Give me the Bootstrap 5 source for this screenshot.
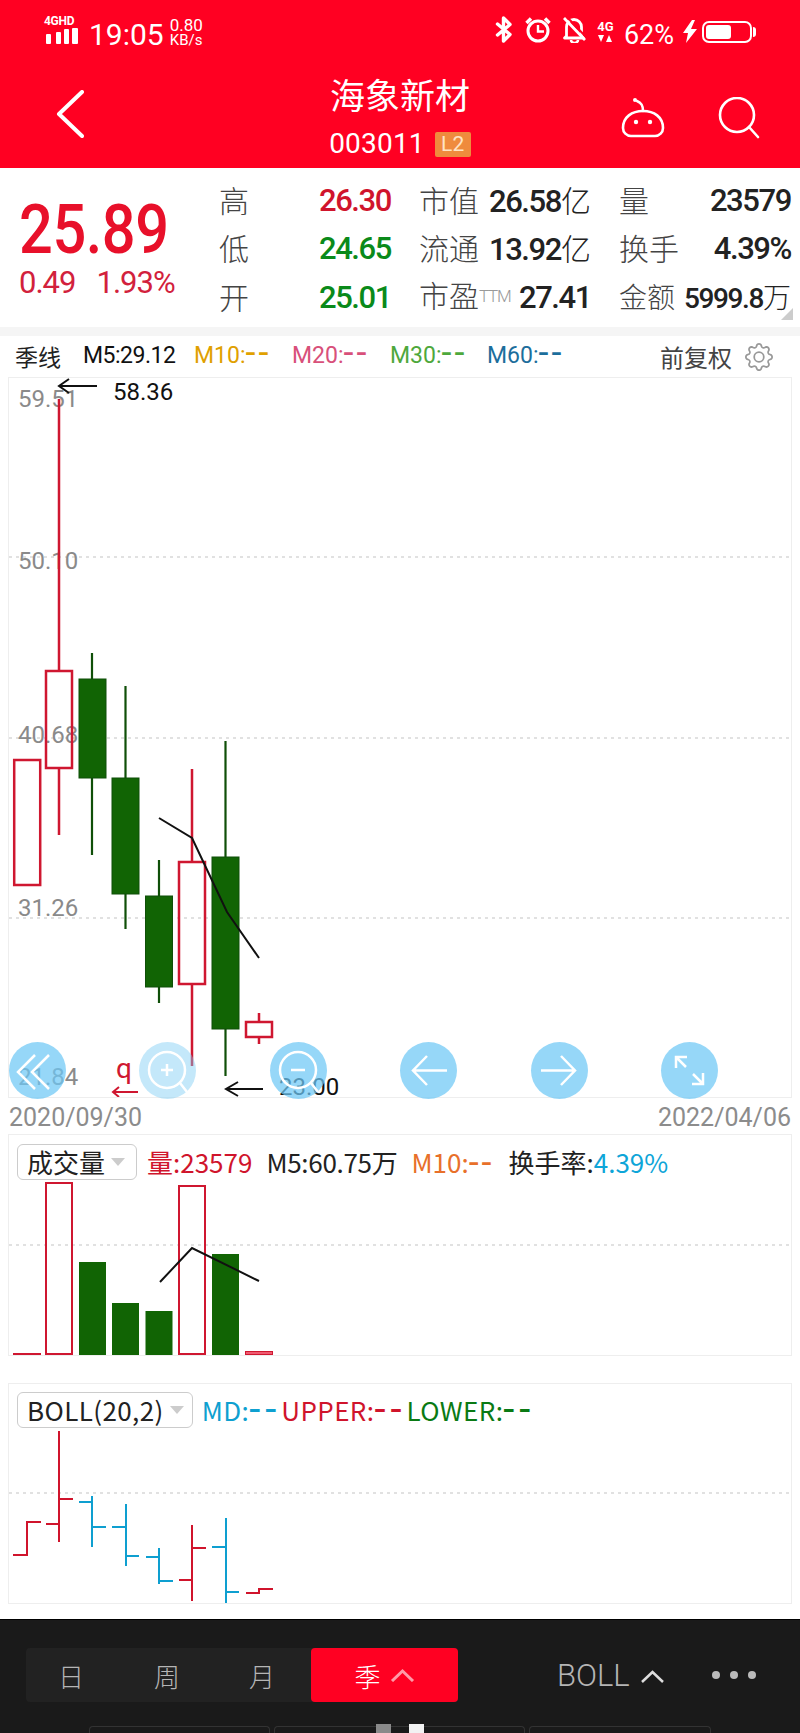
<!DOCTYPE html>
<html lang="zh">
<head>
  <meta charset="UTF-8">
  <title>海象新材 003011</title>
  <link href="https://cdn.jsdelivr.net/npm/bootstrap@5.3.0/dist/css/bootstrap.min.css" rel="stylesheet">
  <style>
    html, body { margin: 0; background: #fff; }
    body { width: 800px; height: 1733px; overflow: hidden; font-family: Roboto, "Noto Sans CJK SC", sans-serif; color: #222; }
    .cn { font-family: "Noto Sans CJK SC", sans-serif; }

    .app-head { height: 168px; background: #ff0022; color: #fff; }
    .status-bar { height: 62px; padding: 16px 44px 0 44px; }
    .sig-box { width: 36px; height: 28px; }
    .sig-text { font-size: 12px; line-height: 11px; font-weight: 700; letter-spacing: -.3px; }
    .clock { font-size: 30px; line-height: 30px; margin-left: 9px; margin-top: 4px; }
    .net-speed { font-size: 17px; line-height: 15px; margin-left: 6px; margin-top: 2px; }
    .net-speed div:last-child { font-size: 15px; }
    .batt-text { font-size: 27px; line-height: 26px; }
    .four-g { font-size: 13px; font-weight: 700; line-height: 13px; text-align: center; width: 17px; }
    .four-g svg { display: block; margin: 2px auto 0; }
    .nav-line { height: 106px; position: relative; padding-top: 28px; }
    .back-icon { margin-left: 56px; }
    .title-box { position: absolute; left: 0; right: 0; top: 10px; text-align: center; }
    .title-name { font-size: 35px; line-height: 44px; }
    .code-line { font-size: 28px; line-height: 28px; margin-top: 14px; letter-spacing: .2px; }
    .l2-tag { width: 36px; height: 25px; margin-left: 10px; background: #ef8b3d; color: #ffe3c4; font-size: 21px; line-height: 25px; border-radius: 2px; }
    .nav-icons { position: absolute; top: 35px; right: 40px; gap: 52px; }

    .quote-box { height: 159px; position: relative; }
    .price-side { width: 219px; padding: 31px 0 0 19px; color: #e8102a; }
    .price-big { font-size: 68px; line-height: 62px; transform: scaleX(.875); transform-origin: left; font-weight: 500; letter-spacing: -.5px; }
    .price-chg { font-size: 31px; line-height: 36px; color: #d2213c; margin-top: 4px; gap: 21px; letter-spacing: -1px; }
    .quote-grid { display: grid; grid-template-columns: 172px 172px 172px; column-gap: 28px; grid-auto-rows: 48.5px; padding-top: 7px; }
    .quote-cell { font-size: 31px; font-weight: 500; letter-spacing: -1.4px; color: #222; white-space: nowrap; }
    .quote-cell > span:last-child { padding-top: 3px; }
    .quote-cell .cn { font-size: 30px; font-weight: 300; color: #444; letter-spacing: 0; }
    .quote-cell .unit { color: #222; font-weight: 300; }
    .quote-cell.cell-tight { font-size: 28px; }
    .quote-cell.cell-tight .cn { font-size: 28px; }
    .ttm { font-size: 17px; color: #999; font-weight: 300; letter-spacing: -1.2px; vertical-align: 5px; }
    .val-up { color: #d0142c; }
    .val-down { color: #0a8a1a; }
    .corner-mark { position: absolute; right: 7px; bottom: 7px; width: 0; height: 0; border-left: 12px solid transparent; border-bottom: 12px solid #ccc; }
    .gray-band { height: 9px; background: #f5f5f5; }

    .ind-row { height: 41px; padding: 0 27px 0 15px; font-size: 23px; white-space: nowrap; }
    .ind-title { width: 68px; }
    .ind-m5 { width: 111px; color: #111; letter-spacing: -.5px; }
    .ind-m10 { width: 98px; color: #e0a000; }
    .ind-m20 { width: 98px; color: #d8507a; }
    .ind-m30 { width: 97px; color: #4ea83c; }
    .ind-m60 { color: #1c6e9c; }
    .ind-right { font-size: 24px; color: #444; gap: 13px; }
    .dash2 { font-family: Roboto, sans-serif; font-size: 36px; line-height: 0; letter-spacing: 3px; font-variant-ligatures: none; vertical-align: -2px; font-weight: 400; }

    .chart-box { margin: 0 8px; border: 1px solid #eee; position: relative; background: #fff; }
    .chart-box svg.plot { display: block; }
    .axis-label { font: 24px Roboto, sans-serif; fill: #8a8a8a; }
    .note-label { font: 24px Roboto, sans-serif; fill: #111; }
    .float-btns { position: absolute; left: 0; top: 664px; gap: 73.4px; }
    .float-btn { width: 57px; height: 57px; border-radius: 50%; background: rgba(110, 200, 245, .72); }
    .float-btn.dim { background: rgba(125, 205, 245, .45); }
    .date-row { height: 36px; padding: 6px 9px 0; color: #8c8c8c; font-size: 25px; line-height: 28px; }

    .tool-bar { position: absolute; left: 8px; top: 7px; gap: 10px; font-size: 26px; white-space: nowrap; }
    .pick-box { height: 36px; border: 1px solid #ccc; border-radius: 6px; padding: 0 11px 0 9px; gap: 6px; font-size: 26px; color: #222; background: #fff; }
    .pick-arrow { width: 0; height: 0; border-left: 7px solid transparent; border-right: 7px solid transparent; border-top: 8px solid #ccc; }
    .vol-m5 { letter-spacing: -.3px; }
    .vol-box { height: 222px; }
    .boll-box { height: 221px; margin-top: 27px; }
    .boll-bar { top: 6px; letter-spacing: .4px; gap: 9px; }
    .boll-bar .pick-box { padding-right: 8px; }
    .boll-bar .dash2 { font-size: 40px; letter-spacing: 5px; }

    .foot-bar { position: absolute; left: 0; top: 1619px; width: 800px; height: 114px; background: #1a1a1a; color: #b5b5b5; border-top: 1px solid #000; }
    .period-group { position: absolute; left: 26px; top: 28px; width: 432px; height: 54px; background: #222; border-radius: 4px; font-size: 26px; font-weight: 300; }
    .period-day { width: 90px; text-align: center; }
    .period-week { width: 102px; text-align: center; }
    .period-month { width: 88px; text-align: center; }
    .period-on { width: 147px; background: #ff0022; color: #fff; border-radius: 4px; height: 54px; gap: 9px; margin-left: auto; }
    .foot-side { position: absolute; left: 557px; top: 36px; font-size: 31px; font-weight: 300; gap: 10px; line-height: 40px; }
    .dots { position: absolute; left: 712px; top: 51px; gap: 10px; }
    .dots i { width: 8px; height: 8px; border-radius: 50%; background: #bbb; display: block; }
    .pager-tab { position: absolute; top: 106px; height: 10px; border: 1px solid #333; border-bottom: 0; border-radius: 4px 4px 0 0; }
    .pager-dot { position: absolute; top: 104px; width: 15px; height: 9px; }
  </style>
</head>
<body>
  <div class="position-relative">
    <header class="app-head">
      <div class="status-bar d-flex justify-content-between">
        <div class="d-flex">
          <div class="sig-box">
            <div class="sig-text">4GHD</div>
            <svg width="36" height="17" class="d-block"><g fill="#fff"><rect x="2" y="7" width="5" height="10" rx="1"/><rect x="12" y="5" width="5" height="12" rx="1"/><rect x="20" y="2" width="5" height="15" rx="1"/><rect x="28" y="1" width="6" height="16" rx="1"/></g></svg>
          </div>
          <div class="clock">19:05</div>
          <div class="net-speed"><div>0.80</div><div>KB/s</div></div>
        </div>
        <div class="d-flex align-items-start">
          <svg width="18" height="27" viewBox="0 0 18 27" fill="none" stroke="#fff" stroke-width="3.4" stroke-linejoin="round" stroke-linecap="round"><path d="M2.5 8 15 18.5 8.5 25V2L15 8.5 2.5 19"/></svg>
          <svg width="26" height="27" viewBox="0 0 26 27" style="margin-left:12px" fill="none" stroke="#fff"><circle cx="13" cy="15" r="10" stroke-width="3"/><path d="M13 9v6.500h6" stroke-width="2.400"/><path d="M1.500 7 6 2.500M24.500 7 20 2.500" stroke-width="3.500"/></svg>
          <svg width="25" height="27" viewBox="0 0 25 27" style="margin-left:11px" fill="none" stroke="#fff"><path d="M4.500 20V11a7.500 7.500 0 0 1 15 0v9l2 2H2.500z" stroke-width="2.800" stroke-linejoin="round"/><path d="M9 24a3.500 3 0 0 0 7 0" stroke-width="2.500"/><path d="M2 2l21 22" stroke-width="2.800"/><path d="M5 1l21 22" stroke-width="2" stroke="#ff0022"/></svg>
          <div class="four-g" style="margin-left:10px;margin-top:4px">4G<svg width="16" height="8"><path d="M1 0h6L4 7zM9 7h6l-3-7z" fill="#fff"/></svg></div>
          <div class="batt-text" style="margin-left:10px;margin-top:6px">62%</div>
          <svg width="14" height="23" viewBox="0 0 14 23" style="margin-left:9px;margin-top:4px"><path d="M9 0 0 13h5l-2 10 11-14H8l4-9z" fill="#fff"/></svg>
          <svg width="54" height="22" viewBox="0 0 54 22" style="margin-left:5px;margin-top:5px"><rect x="1" y="1" width="48" height="20" rx="6" fill="none" stroke="#fff" stroke-width="2"/><rect x="4" y="4" width="25" height="14" rx="3" fill="#fff"/><path d="M51 6c2 0 3 1 3 3v4c0 2-1 3-3 3z" fill="#fff"/></svg>
        </div>
      </div>
      <div class="nav-line">
        <svg class="back-icon d-block" width="28" height="48" viewBox="0 0 28 48" fill="none" stroke="#fff" stroke-width="4" stroke-linecap="round" stroke-linejoin="round"><path d="M26 2 3 24l23 22"/></svg>
        <div class="title-box">
          <div class="title-name cn">海象新材</div>
          <div class="code-line d-flex justify-content-center align-items-center">
            <span>003011</span><span class="l2-tag">L2</span>
          </div>
        </div>
        <div class="nav-icons d-flex">
          <svg width="46" height="42" viewBox="0 0 46 42" fill="none" stroke="#fff" stroke-width="2.600" stroke-linecap="round"><path d="M11 39h24a8 8 0 0 0 8-8c0-11-9-17-20-17S3 20 3 31a8 8 0 0 0 8 8z"/><path d="M23 14c0-5-1-8-6-10"/><circle cx="15" cy="3" r="2" fill="#fff" stroke="none"/><circle cx="16" cy="25" r="2.200" fill="#fff" stroke="none"/><circle cx="30" cy="25" r="2.200" fill="#fff" stroke="none"/></svg>
          <svg width="42" height="42" viewBox="0 0 42 42" fill="none" stroke="#fff" stroke-width="2.600" stroke-linecap="round"><circle cx="19" cy="18" r="17"/><path d="M31 30l9 10"/></svg>
        </div>
      </div>
    </header>

    <section class="quote-box d-flex">
      <div class="price-side">
        <div class="price-big">25.89</div>
        <div class="price-chg d-flex"><span>0.49</span><span>1.93%</span></div>
      </div>
      <div class="quote-grid">
        <div class="quote-cell d-flex justify-content-between align-items-center"><span class="cn">高</span><span class="val-up">26.30</span></div>
        <div class="quote-cell d-flex justify-content-between align-items-center"><span class="cn">市值</span><span>26.58<span class="cn unit">亿</span></span></div>
        <div class="quote-cell d-flex justify-content-between align-items-center"><span class="cn">量</span><span>23579</span></div>
        <div class="quote-cell d-flex justify-content-between align-items-center"><span class="cn">低</span><span class="val-down">24.65</span></div>
        <div class="quote-cell d-flex justify-content-between align-items-center"><span class="cn">流通</span><span>13.92<span class="cn unit">亿</span></span></div>
        <div class="quote-cell d-flex justify-content-between align-items-center"><span class="cn">换手</span><span>4.39%</span></div>
        <div class="quote-cell d-flex justify-content-between align-items-center"><span class="cn">开</span><span class="val-down">25.01</span></div>
        <div class="quote-cell d-flex justify-content-between align-items-center"><span><span class="cn">市盈</span><span class="ttm">TTM</span></span><span>27.41</span></div>
        <div class="quote-cell cell-tight d-flex justify-content-between align-items-center"><span class="cn">金额</span><span>5999.8<span class="cn unit">万</span></span></div>
      </div>
      <div class="corner-mark"></div>
    </section>
    <div class="gray-band"></div>

    <div class="ind-row d-flex align-items-center">
      <span class="ind-title cn">季线</span>
      <span class="ind-m5">M5:29.12</span>
      <span class="ind-m10">M10:<span class="dash2">--</span></span>
      <span class="ind-m20">M20:<span class="dash2">--</span></span>
      <span class="ind-m30">M30:<span class="dash2">--</span></span>
      <span class="ind-m60">M60:<span class="dash2">--</span></span>
      <span class="ind-right ms-auto d-flex align-items-center cn">前复权
        <svg width="28" height="28" viewBox="0 0 16 16" fill="#999"><path d="M8 4.754a3.246 3.246 0 1 0 0 6.492 3.246 3.246 0 0 0 0-6.492zM5.754 8a2.246 2.246 0 1 1 4.492 0 2.246 2.246 0 0 1-4.492 0z"/><path d="M9.796 1.343c-.527-1.790-3.065-1.790-3.592 0l-.094.319a.873.873 0 0 1-1.255.52l-.292-.16c-1.640-.892-3.433.902-2.540 2.541l.159.292a.873.873 0 0 1-.52 1.255l-.319.094c-1.790.527-1.790 3.065 0 3.592l.319.094a.873.873 0 0 1 .52 1.255l-.16.292c-.892 1.640.901 3.434 2.541 2.540l.292-.159a.873.873 0 0 1 1.255.52l.094.319c.527 1.790 3.065 1.790 3.592 0l.094-.319a.873.873 0 0 1 1.255-.52l.292.16c1.640.893 3.434-.902 2.540-2.541l-.159-.292a.873.873 0 0 1 .52-1.255l.319-.094c1.790-.527 1.790-3.065 0-3.592l-.319-.094a.873.873 0 0 1-.52-1.255l.16-.292c.893-1.640-.902-3.433-2.541-2.540l-.292.159a.873.873 0 0 1-1.255-.52l-.094-.319zm-2.633.283c.246-.835 1.428-.835 1.674 0l.094.319a1.873 1.873 0 0 0 2.693 1.115l.291-.16c.764-.415 1.600.42 1.184 1.185l-.159.292a1.873 1.873 0 0 0 1.116 2.692l.318.094c.835.246.835 1.428 0 1.674l-.319.094a1.873 1.873 0 0 0-1.115 2.693l.16.291c.415.764-.42 1.600-1.185 1.184l-.291-.159a1.873 1.873 0 0 0-2.693 1.116l-.094.318c-.246.835-1.428.835-1.674 0l-.094-.319a1.873 1.873 0 0 0-2.692-1.115l-.292.16c-.764.415-1.600-.42-1.184-1.185l.159-.291A1.873 1.873 0 0 0 1.945 8.930l-.319-.094c-.835-.246-.835-1.428 0-1.674l.319-.094A1.873 1.873 0 0 0 3.060 4.377l-.16-.292c-.415-.764.42-1.600 1.185-1.184l.292.159a1.873 1.873 0 0 0 2.692-1.115l.094-.319z"/></svg>
      </span>
    </div>

    <!-- K线 -->
    <div class="chart-box">
      <svg class="plot" width="782" height="719" viewBox="9 378 782 719">
        <g stroke="#d8d8d8" stroke-dasharray="3 4" stroke-width="1.500">
          <line x1="9" y1="557" x2="791" y2="557"/><line x1="9" y1="738" x2="791" y2="738"/><line x1="9" y1="918" x2="791" y2="918"/>
        </g>
        <text class="axis-label" x="18" y="407">59.51</text>
        <text class="axis-label" x="18" y="569">50.10</text>
        <text class="axis-label" x="18" y="743">40.68</text>
        <text class="axis-label" x="18" y="916">31.26</text>
        <text class="axis-label" x="18" y="1085">21.84</text>
        <g fill="none" stroke="#cf1730" stroke-width="2.500">
          <rect x="14.200" y="760" width="26" height="125"/>
          <path d="M59 399V670M59 768V835"/><rect x="46" y="671" width="26" height="97"/>
          <path d="M192 769V862M192 984V1066"/><rect x="179" y="862" width="26" height="122"/>
          <path d="M259 1013V1022M259 1037V1044"/><rect x="246" y="1022" width="26" height="15"/>
        </g>
        <g fill="#116404" stroke="#0f4f08" stroke-width="1">
          <path d="M92 653V855M125.500 686V929M159 860V1003M225.500 741V1076" stroke-width="2.200" fill="none"/>
          <rect x="79" y="679" width="27" height="99"/><rect x="112" y="778" width="27" height="116"/><rect x="145.500" y="896" width="27" height="91"/><rect x="212" y="857" width="27" height="172"/>
        </g>
        <polyline points="159,818 192,838 227,912 259,958" fill="none" stroke="#111" stroke-width="2"/>
        <!-- 标注 -->
        <path d="M97 386H59M69 379l-10 7 10 7" fill="none" stroke="#111" stroke-width="2"/>
        <text class="note-label" x="113" y="400">58.36</text>
        <path d="M263 1089H226M238 1082l-12 7 12 7" fill="none" stroke="#111" stroke-width="2"/>
        <text class="note-label" x="279" y="1095">23.00</text>
        <text x="116" y="1078" font-family="Roboto, sans-serif" font-size="28" fill="#cf1730">q</text>
        <path d="M138 1092H113M119 1087l-6 5 6 5" fill="none" stroke="#cf1730" stroke-width="2"/>
      </svg>
      <div class="float-btns d-flex">
        <div class="float-btn"><svg width="57" height="57" fill="none" stroke="#fff" stroke-width="2.500"><path d="M26 13 9 30l17 17M40 13 23 30l17 17"/></svg></div>
        <div class="float-btn dim"><svg width="57" height="57" fill="none" stroke="#fff" stroke-width="2.500"><circle cx="28" cy="28" r="18"/><path d="M41 41l7 9M22 28h12M28 22v12"/></svg></div>
        <div class="float-btn"><svg width="57" height="57" fill="none" stroke="#fff" stroke-width="2.500"><circle cx="28" cy="28" r="18"/><path d="M41 41l7 9M21 28h14"/></svg></div>
        <div class="float-btn"><svg width="57" height="57" fill="none" stroke="#fff" stroke-width="2.500"><path d="M47 28.500H13M27 14 13 28.500 27 43"/></svg></div>
        <div class="float-btn"><svg width="57" height="57" fill="none" stroke="#fff" stroke-width="2.500"><path d="M10 28.500h34M30 14l14 14.500L30 43"/></svg></div>
        <div class="float-btn"><svg width="57" height="57" fill="none" stroke="#fff" stroke-width="2.500"><path d="M15 15l10 10M15 26V15h11M42 42 32 32M42 31v11H31"/></svg></div>
      </div>
    </div>
    <div class="date-row d-flex justify-content-between"><span>2020/09/30</span><span>2022/04/06</span></div>

    <!-- 成交量 -->
    <div class="chart-box vol-box">
      <svg class="plot" width="782" height="220" viewBox="9 1135 782 220">
        <line x1="9" y1="1245" x2="791" y2="1245" stroke="#d8d8d8" stroke-dasharray="3 4" stroke-width="1.500"/>
        <line x1="13" y1="1354" x2="41" y2="1354" stroke="#cf1730" stroke-width="2"/>
        <g fill="none" stroke="#cf1730" stroke-width="2">
          <rect x="46" y="1183" width="26" height="171"/><rect x="179" y="1186" width="26" height="168"/>
        </g>
        <g fill="#116404">
          <rect x="79" y="1262" width="27" height="94"/><rect x="112" y="1303" width="27" height="53"/><rect x="145.500" y="1311" width="27" height="45"/><rect x="212" y="1254" width="27" height="102"/>
        </g>
        <rect x="245.500" y="1351.500" width="27" height="3" fill="#ef5a70" stroke="#cf1730"/>
        <polyline points="160,1282 192,1248 259,1281" fill="none" stroke="#111" stroke-width="2"/>
      </svg>
      <div class="tool-bar d-flex align-items-center cn">
        <div class="pick-box d-flex align-items-center">成交量<i class="pick-arrow"></i></div>
        <span class="val-up">量:23579</span>
        <span class="ms-1 vol-m5">M5:60.75万</span>
        <span class="ms-1" style="color:#e8702a">M10:<span class="dash2">--</span></span>
        <span class="ms-1">换手率:<span style="color:#0ea5d8">4.39%</span></span>
      </div>
    </div>

    <!-- BOLL -->
    <div class="chart-box boll-box">
      <svg class="plot" width="782" height="219" viewBox="9 1384 782 219">
        <line x1="9" y1="1493" x2="791" y2="1493" stroke="#d8d8d8" stroke-dasharray="3 4" stroke-width="1.500"/>
        <path fill="none" stroke="#d0142c" stroke-width="2" d="M13 1555H27V1522H41M46 1524H59M59 1431V1542M59 1499H73M179 1580H192M192 1525V1601M192 1548H206M246 1593H259V1589H273"/>
        <path fill="none" stroke="#0e9fd0" stroke-width="2" d="M79 1502H92M92 1496V1547M92 1527H106M112 1527H126M126 1504V1566M126 1556H139M146 1557H159M159 1548V1584M159 1581H173M212 1547H226M226 1518V1603M226 1592H239"/>
      </svg>
      <div class="tool-bar boll-bar d-flex align-items-center cn">
        <div class="pick-box d-flex align-items-center">BOLL(20,2)<i class="pick-arrow"></i></div>
        <span class="d-flex"><span style="color:#0ea0d0">MD:<span class="dash2">--</span></span><span class="val-up">UPPER:<span class="dash2">--</span></span><span style="color:#0a7a14">LOWER:<span class="dash2">--</span></span></span>
      </div>
    </div>

    <footer class="foot-bar">
      <div class="period-group d-flex align-items-center cn">
        <span class="period-day">日</span><span class="period-week">周</span><span class="period-month">月</span>
        <span class="period-on d-flex align-items-center justify-content-center">季<svg width="25" height="14" fill="none" stroke="#ff9aa8" stroke-width="3"><path d="M2 13 12.500 3 23 13"/></svg></span>
      </div>
      <div class="foot-side d-flex align-items-center">BOLL<svg width="25" height="14" fill="none" stroke="#ddd" stroke-width="2.500"><path d="M2 13 12.500 3 23 13"/></svg></div>
      <div class="dots d-flex"><i></i><i></i><i></i></div>
      <div class="pager-tab" style="left:89px;width:181px"></div>
      <div class="pager-tab" style="left:274px;width:251px"></div>
      <div class="pager-tab" style="left:529px;width:182px"></div>
      <div class="pager-dot" style="left:376px;background:#8a8a8a"></div>
      <div class="pager-dot" style="left:409px;background:#f2f2f2"></div>
    </footer>
  </div>
</body>
</html>
